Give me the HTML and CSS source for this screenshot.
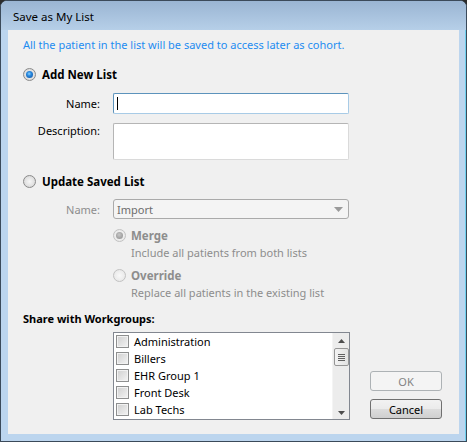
FILE: index.html
```html
<!DOCTYPE html>
<html>
<head>
<meta charset="utf-8">
<link rel="stylesheet" href="styles.css">
</head>
<body>
<div class="window">
  <div class="titlebar"><span class="title">Save as My List</span></div>
  <div class="frame">
    <div class="client">
      <p class="info">All the patient in the list will be saved to access later as cohort.</p>

      <div class="option"><span class="radio checked"></span><span class="opt-label">Add New List</span></div>

      <div class="form-row name-row">
        <label class="field-label">Name:</label>
        <div class="input focused"><span class="caret"></span></div>
      </div>
      <div class="form-row desc-row">
        <label class="field-label">Description:</label>
        <div class="textarea"></div>
      </div>

      <div class="option option2"><span class="radio"></span><span class="opt-label">Update Saved List</span></div>

      <div class="form-row select-row">
        <label class="field-label disabled">Name:</label>
        <div class="select"><span>Import</span><svg class="drop" width="9" height="5" viewBox="0 0 9 5"><path d="M0 0h9L4.5 5z" fill="#9a9a9a"/></svg></div>
      </div>

      <div class="sub-options">
        <div class="sub-option"><span class="radio dis checked-dis"></span><span class="sub-label">Merge</span></div>
        <div class="sub-desc">Include all patients from both lists</div>
        <div class="sub-option second"><span class="radio dis"></span><span class="sub-label">Override</span></div>
        <div class="sub-desc">Replace all patients in the existing list</div>
      </div>

      <div class="share-label">Share with Workgroups:</div>

      <div class="bottom">
        <div class="listbox">
          <ul class="items">
            <li><span class="check"></span>Administration</li>
            <li><span class="check"></span>Billers</li>
            <li><span class="check"></span>EHR Group 1</li>
            <li><span class="check"></span>Front Desk</li>
            <li><span class="check"></span>Lab Techs</li>
          </ul>
          <div class="scrollbar">
            <svg class="arrow" width="7" height="4" viewBox="0 0 7 4"><path d="M3.5 0L7 4H0z" fill="#4d4d4d"/></svg>
            <div class="thumb"><span></span><span></span><span></span><span></span></div>
            <div class="track"></div>
            <svg class="arrow" width="7" height="4" viewBox="0 0 7 4"><path d="M0 0h7L3.5 4z" fill="#4d4d4d"/></svg>
          </div>
        </div>
        <div class="buttons">
          <button class="btn" disabled>OK</button>
          <button class="btn">Cancel</button>
        </div>
      </div>
    </div>
  </div>
</div>
</body>
</html>
```

FILE: styles.css
```css
html, body {
  margin: 0;
  padding: 0;
  background: #2b2b2b;
}
body {
  width: 467px;
  height: 442px;
  font-family: "Noto Sans", "DejaVu Sans", sans-serif;
  font-size: 11px;
  color: #000;
}
.window {
  width: 467px;
  height: 442px;
  box-sizing: border-box;
  border: 1px solid #3b4a5a;
  border-radius: 7px 7px 0 0;
  background: #bcd5ee;
  display: flex;
  flex-direction: column;
  overflow: hidden;
}
.titlebar {
  height: 29px;
  flex: none;
  background: linear-gradient(#9ab5d3, #b6cfe8);
  box-sizing: border-box;
  padding-left: 12px;
  display: flex;
  align-items: center;
}
.title {
  font-size: 11.5px;
  color: #000;
  padding-top: 2px;
}
.frame {
  flex: 1;
  padding: 0 6px 7px 7px;
  display: flex;
  background: #bcd5ee;
  border-right: 1px solid #6fd1ef;
}
.client {
  width: 451px;
  height: 404px;
  background: #f0f0f0;
  position: relative;
  box-sizing: border-box;
  padding: 7px 0 0 15px;
}
.info {
  margin: 0;
  color: #1e8cf0;
  height: 16px;
  line-height: 16px;
}
.option {
  display: flex;
  align-items: center;
  height: 16px;
  margin-top: 13px;
}
.option2 {
  margin-top: 13px;
}
.radio {
  width: 13px;
  height: 13px;
  box-sizing: border-box;
  border-radius: 50%;
  border: 1px solid #8a8a8a;
  background: radial-gradient(circle at 50% 50%, #f6f6f6 0, #e6e6e6 45%, #cfcfcf 100%);
  flex: none;
  position: relative;
}
.radio.checked::after {
  content: "";
  position: absolute;
  left: 2px;
  top: 2px;
  width: 7px;
  height: 7px;
  border-radius: 50%;
  background: radial-gradient(circle at 45% 40%, #8cd2ff 0, #2a8be0 35%, #0b4a9a 100%);
}
.radio.dis {
  border-color: #c2c2c2;
  background: radial-gradient(circle, #f8f8f8 0, #ececec 60%, #e0e0e0 100%);
}
.radio.checked-dis::after {
  content: "";
  position: absolute;
  left: 2px;
  top: 2px;
  width: 7px;
  height: 7px;
  border-radius: 50%;
  background: radial-gradient(circle at 45% 40%, #c8c8c8 0, #a8a8a8 50%, #8e8e8e 100%);
}
.opt-label {
  font-weight: bold;
  font-size: 11.5px;
  margin-left: 6px;
}
.form-row {
  display: flex;
  align-items: flex-start;
}
.field-label {
  width: 77px;
  text-align: right;
  flex: none;
  margin-right: 13px;
}
.field-label.disabled {
  color: #8d8d8d;
}
.name-row {
  margin-top: 11px;
  height: 21px;
  align-items: center;
}
.input {
  width: 236px;
  height: 21px;
  box-sizing: border-box;
  background: #fff;
  border: 1px solid #abadb3;
  border-radius: 2px;
  position: relative;
}
.input.focused {
  border-color: #5c93bc;
  border-right-color: #a8cbe6;
  border-bottom-color: #a8cbe6;
}
.caret {
  position: absolute;
  left: 3px;
  top: 3px;
  width: 1px;
  height: 13px;
  background: #000;
}
.desc-row {
  margin-top: 9px;
}
.desc-row .field-label {
  margin-top: 0px;
}
.textarea {
  width: 236px;
  height: 37px;
  box-sizing: border-box;
  background: #fff;
  border: 1px solid #b5b5b5;
  border-right-color: #dadada;
  border-bottom-color: #dadada;
  border-radius: 2px;
}
.select-row {
  margin-top: 10px;
  align-items: center;
}
.select {
  width: 236px;
  height: 20px;
  box-sizing: border-box;
  border: 1px solid #aaaaaa;
  border-radius: 3px;
  background: #f4f4f4;
  display: flex;
  align-items: center;
  justify-content: space-between;
  padding: 0 5px 0 3px;
  color: #6d6d6d;
}
.sub-options {
  margin-left: 90px;
  margin-top: 8px;
  color: #8d8d8d;
}
.sub-option {
  display: flex;
  align-items: center;
  height: 16px;
}
.sub-option.second {
  margin-top: 6px;
}
.sub-label {
  font-weight: bold;
  font-size: 11.5px;
  margin-left: 5px;
}
.sub-desc {
  margin-left: 18px;
  margin-top: 2px;
  height: 16px;
  line-height: 16px;
}
.share-label {
  font-weight: bold;
  margin-top: 10px;
  height: 16px;
  line-height: 16px;
}
.bottom {
  display: flex;
  align-items: flex-end;
  margin-top: 5px;
}
.listbox {
  margin-left: 90px;
  width: 237px;
  height: 88px;
  box-sizing: border-box;
  border: 1px solid #828790;
  background: #fff;
  display: flex;
}
.items {
  list-style: none;
  margin: 0;
  padding: 0 0 0 2px;
  flex: 1;
}
.items li {
  height: 17px;
  display: flex;
  align-items: center;
}
.check {
  width: 13px;
  height: 13px;
  box-sizing: border-box;
  border: 1px solid #8e8f8f;
  background: linear-gradient(135deg, #cfcfcf, #f4f4f4);
  box-shadow: inset 0 0 0 1px #f2f2f2;
  margin-right: 5px;
  flex: none;
}
.scrollbar {
  width: 17px;
  background: #ececec;
  border-left: 1px solid #f4f4f4;
  display: flex;
  flex-direction: column;
  align-items: center;
  padding: 6px 0 4px;
  box-sizing: border-box;
}
.arrow {
  flex: none;
}
.thumb {
  margin-top: 5px;
  width: 15px;
  height: 18px;
  box-sizing: border-box;
  border: 1px solid #969696;
  border-radius: 2px;
  background: linear-gradient(90deg, #f3f3f3, #e2e2e2);
  display: flex;
  flex-direction: column;
  align-items: center;
  justify-content: center;
  gap: 1px;
}
.thumb span {
  width: 7px;
  height: 1px;
  background: #606060;
}
.track {
  flex: 1;
}
.buttons {
  margin-left: 20px;
  display: flex;
  flex-direction: column;
  gap: 8px;
  margin-bottom: 1px;
}
.btn {
  width: 72px;
  height: 20px;
  box-sizing: border-box;
  font-family: "Noto Sans", "DejaVu Sans", sans-serif;
  font-size: 11px;
  border: 1px solid #707070;
  border-radius: 3px;
  background: linear-gradient(#f2f2f2 0, #ebebeb 50%, #dddddd 50%, #cfcfcf 100%);
  padding: 0;
  color: #000;
}
.btn:disabled {
  border-color: #adb2b5;
  background: #f4f4f4;
  color: #838383;
}
```
